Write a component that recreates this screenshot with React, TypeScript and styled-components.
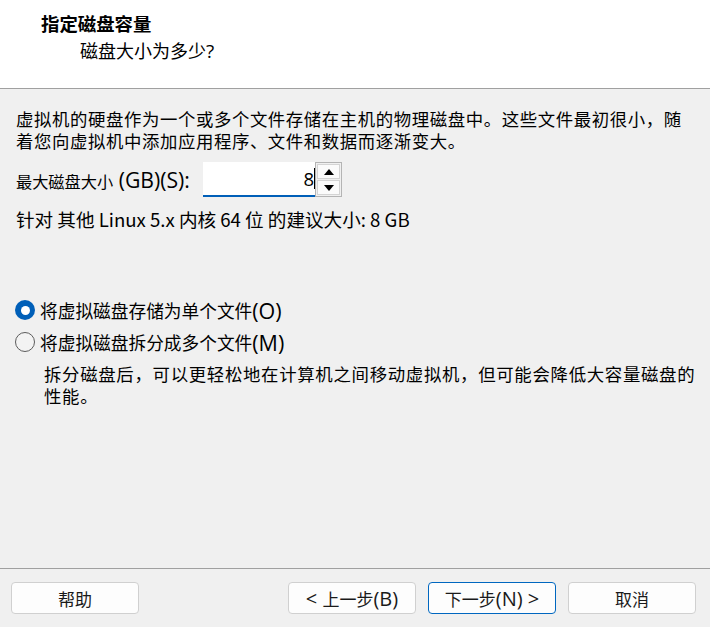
import React from "react";
import styled, { createGlobalStyle } from "styled-components";

const Global = createGlobalStyle`
  html, body { margin: 0; padding: 0; background: #ffffff; }
  body { font-family: "Noto Sans CJK SC", "Noto Sans", sans-serif; color: #000; }
  * { box-sizing: border-box; }
`;

const Window = styled.div`
  width: 710px;
  height: 627px;
  display: flex;
  flex-direction: column;
  background: #f0f0f0;
  overflow: hidden;
`;

const Header = styled.div`
  height: 89px;
  background: #ffffff;
  border-bottom: 1px solid #a0a0a0;
  display: flex;
  flex-direction: column;
  padding: 10px 0 0 41px;
`;

const Title = styled.div`
  font-size: 18.4px;
  font-weight: 700;
  line-height: 26px;
`;

const Subtitle = styled.div`
  font-size: 18px;
  line-height: 26px;
  padding: 1px 0 0 39px;
`;

const Body = styled.div`
  flex: 1;
  padding: 19px 16px 0 16px;
  display: flex;
  flex-direction: column;
`;

const Para = styled.p<{ $indent?: number; $spacing?: number }>`
  margin: 0;
  padding-left: ${(p) => p.$indent ?? 0}px;
  font-size: 17.4px;
  line-height: 22px;
  width: ${(p) => (p.$indent ? 655 + p.$indent : 680)}px;
  letter-spacing: ${(p) => p.$spacing ?? 0.6}px;
`;

const Lat = styled.span<{ $size: number }>`
  font-family: "Open Sans", sans-serif;
  font-size: ${(p) => p.$size}px;
`;

const SizeRow = styled.div`
  margin-top: 10px;
  display: flex;
  align-items: center;
  height: 35px;
`;

const Label = styled.span`
  font-size: 16.2px;
  width: 187px;
  white-space: nowrap;
`;

const Field = styled.div`
  width: 112px;
  height: 35px;
  background: #ffffff;
  border-bottom: 2px solid #005fb8;
  display: flex;
  align-items: center;
  justify-content: flex-end;
  padding-right: 0;
  font-family: "Open Sans", sans-serif;
  font-size: 18.5px;
`;

const Caret = styled.span`
  width: 1px;
  height: 21px;
  background: #000;
  margin-left: 0;
`;

const Spin = styled.div`
  width: 27px;
  height: 35px;
  border: 1px solid #b4b4b4;
  display: flex;
  flex-direction: column;
  padding: 1px;
  gap: 1px;
  background: #f0f0f0;
`;

const SpinBtn = styled.div`
  flex: 1;
  border: 1px solid #d4d4d4;
  background: #fbfbfb;
  display: flex;
  align-items: center;
  justify-content: center;
`;

const Recommend = styled.div`
  margin-top: 11px;
  font-size: 18.6px;
  line-height: 22px;
  white-space: nowrap;
`;

const RadioRow = styled.label<{ $top: number }>`
  margin-top: ${(p) => p.$top}px;
  display: flex;
  align-items: center;
  height: 22px;
  font-size: 17.7px;
  white-space: nowrap;
`;

const RadioDot = styled.span<{ $on?: boolean }>`
  width: 20px;
  height: 20px;
  border-radius: 50%;
  margin-right: 5px;
  margin-left: -1px;
  flex: none;
  background: ${(p) => (p.$on ? "#005fb8" : "#f3f3f3")};
  border: ${(p) => (p.$on ? "none" : "1px solid #5c5c5c")};
  display: flex;
  align-items: center;
  justify-content: center;
  &::after {
    content: "";
    display: ${(p) => (p.$on ? "block" : "none")};
    width: 9px;
    height: 9px;
    border-radius: 50%;
    background: #ffffff;
  }
`;

const RadioNote = styled.div`
  margin-top: 10px;
`;

const Footer = styled.div`
  height: 59px;
  border-top: 1px solid #a0a0a0;
  display: flex;
  align-items: flex-start;
  padding: 13px 14px 0 11px;
  gap: 12px;
`;

const Spacer = styled.div`
  flex: 1;
`;

const Button = styled.button<{ $primary?: boolean }>`
  width: 128px;
  height: 32px;
  border-radius: 4px;
  background: #fdfdfd;
  border: 1px solid ${(p) => (p.$primary ? "#0067c0" : "#d0d0d0")};
  font-family: "Noto Sans CJK SC", sans-serif;
  font-size: 17px;
  color: #1a1a1a;
  padding: 0;
  display: flex;
  align-items: center;
  justify-content: center;
  white-space: pre;
`;

const Arrow = ({ up }: { up?: boolean }) => (
  <svg width="10" height="6" viewBox="0 0 10 6">
    <path d={up ? "M0 6 L5 0 L10 6 Z" : "M0 0 L5 6 L10 0 Z"} fill="#000" />
  </svg>
);

export default function App() {
  return (
    <>
      <Global />
      <Window>
        <Header>
          <Title>指定磁盘容量</Title>
          <Subtitle>
            磁盘大小为多少<Lat $size={19}>?</Lat>
          </Subtitle>
        </Header>
        <Body>
          <Para>
            虚拟机的硬盘作为一个或多个文件存储在主机的物理磁盘中。这些文件最初很小，随着您向虚拟机中添加应用程序、文件和数据而逐渐变大。
          </Para>
          <SizeRow>
            <Label>
              最大磁盘大小<Lat $size={21.2}> (GB)(S):</Lat>
            </Label>
            <Field>
              8<Caret />
            </Field>
            <Spin>
              <SpinBtn>
                <Arrow up />
              </SpinBtn>
              <SpinBtn>
                <Arrow />
              </SpinBtn>
            </Spin>
          </SizeRow>
          <Recommend>针对 其他 Linux 5.x 内核 64 位 的建议大小: 8 GB</Recommend>
          <RadioRow $top={69}>
            <RadioDot $on />
            将虚拟磁盘存储为单个文件<Lat $size={21.5}>(O)</Lat>
          </RadioRow>
          <RadioRow $top={10}>
            <RadioDot />
            将虚拟磁盘拆分成多个文件<Lat $size={21.5}>(M)</Lat>
          </RadioRow>
          <RadioNote>
            <Para $indent={28} $spacing={0.7}>
              拆分磁盘后，可以更轻松地在计算机之间移动虚拟机，但可能会降低大容量磁盘的性能。
            </Para>
          </RadioNote>
        </Body>
        <Footer>
          <Button>帮助</Button>
          <Spacer />
          <Button>
            <Lat $size={20}>&lt; </Lat>上一步<Lat $size={20}>(B)</Lat>
          </Button>
          <Button $primary>
            下一步<Lat $size={20}>(N) &gt;</Lat>
          </Button>
          <Button>取消</Button>
        </Footer>
      </Window>
    </>
  );
}
